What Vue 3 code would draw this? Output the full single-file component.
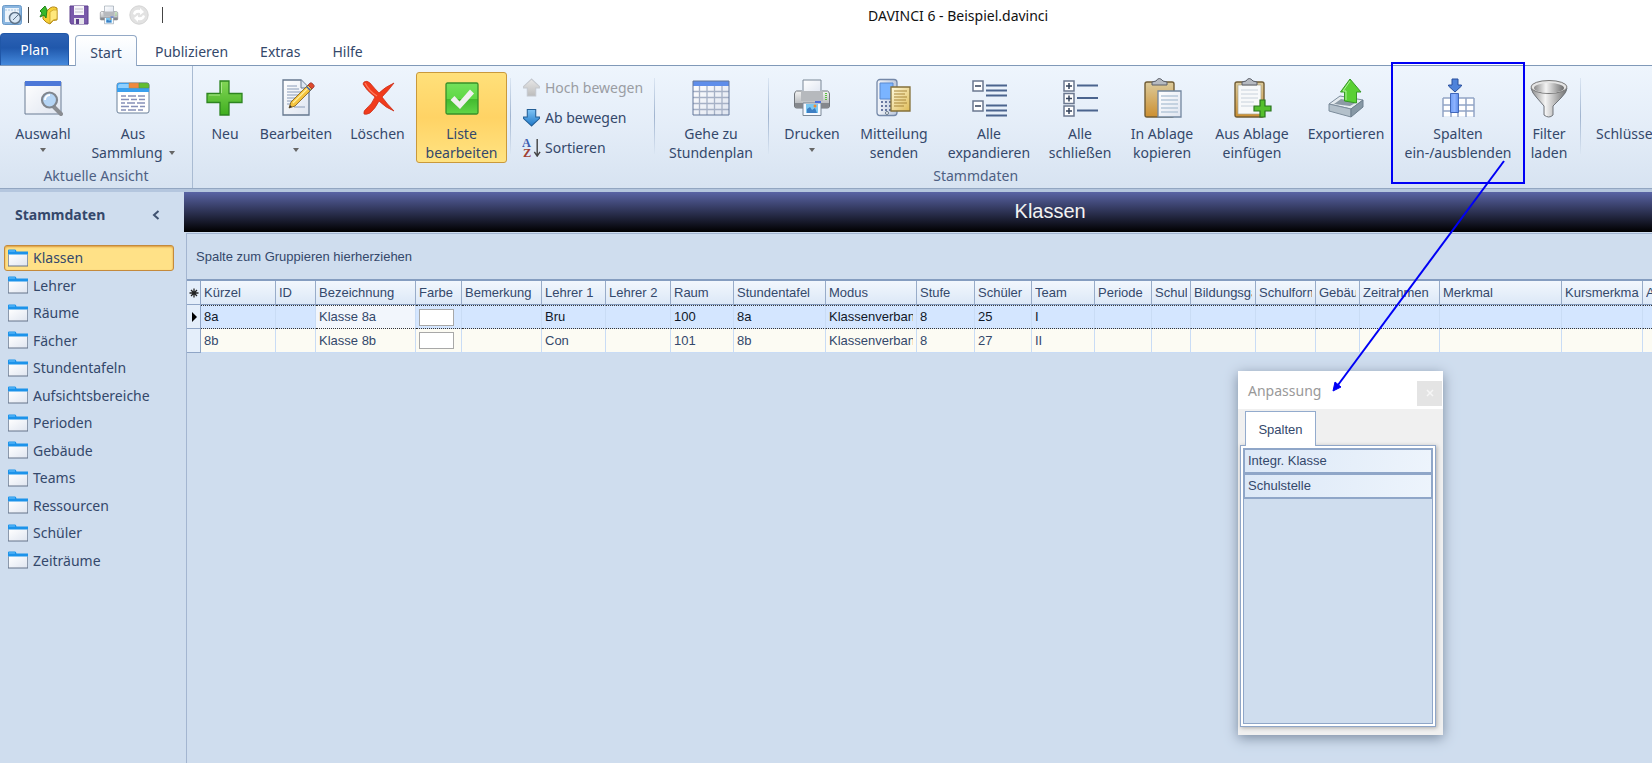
<script setup>
import { ref } from 'vue'

const menuTabs = ['Publizieren', 'Extras', 'Hilfe']

const editTools = [
  { icon: 'plus', lines: ['Neu'], size: 'w56' },
  { icon: 'edit', lines: ['Bearbeiten'], size: 'w86', menu: true },
  { icon: 'delete', lines: ['Löschen'], size: 'w77' },
  { icon: 'check', lines: ['Liste', 'bearbeiten'], size: 'w91', active: true }
]

const moveTools = [
  { icon: 'up', label: 'Hoch bewegen', disabled: true },
  { icon: 'down', label: 'Ab bewegen' },
  { icon: 'sort', label: 'Sortieren' }
]

const listTools = [
  { icon: 'printer', lines: ['Drucken'], size: 'w82', menu: true },
  { icon: 'phone', lines: ['Mitteilung', 'senden'], size: 'w82' },
  { icon: 'expand', lines: ['Alle', 'expandieren'], size: 'w108' },
  { icon: 'collapse', lines: ['Alle', 'schließen'], size: 'w74' },
  { icon: 'copy', lines: ['In Ablage', 'kopieren'], size: 'w90' },
  { icon: 'paste', lines: ['Aus Ablage', 'einfügen'], size: 'w90' },
  { icon: 'export', lines: ['Exportieren'], size: 'w98' },
  { icon: 'columns', lines: ['Spalten', 'ein-/ausblenden'], size: 'w126' },
  { icon: 'filter', lines: ['Filter', 'laden'], size: 'w56' }
]

const folders = ['Klassen', 'Lehrer', 'Räume', 'Fächer', 'Stundentafeln', 'Aufsichtsbereiche',
  'Perioden', 'Gebäude', 'Teams', 'Ressourcen', 'Schüler', 'Zeiträume']
const current = ref('Klassen')

const columns = [
  { name: 'Kürzel', width: 75 }, { name: 'ID', width: 40 }, { name: 'Bezeichnung', width: 100 },
  { name: 'Farbe', width: 46 }, { name: 'Bemerkung', width: 80 }, { name: 'Lehrer 1', width: 64 },
  { name: 'Lehrer 2', width: 65 }, { name: 'Raum', width: 63 }, { name: 'Stundentafel', width: 92 },
  { name: 'Modus', width: 91 }, { name: 'Stufe', width: 58 }, { name: 'Schüler', width: 57 },
  { name: 'Team', width: 63 }, { name: 'Periode', width: 57 }, { name: 'Schul', width: 39 },
  { name: 'Bildungsgang', width: 65 }, { name: 'Schulform', width: 60 }, { name: 'Gebäude', width: 44 },
  { name: 'Zeitrahmen', width: 80 }, { name: 'Merkmal', width: 122 }, { name: 'Kursmerkmal', width: 81 },
  { name: 'A', width: 0 }
]

const rows = [
  { 'Kürzel': '8a', Bezeichnung: 'Klasse 8a', 'Lehrer 1': 'Bru', Raum: '100', Stundentafel: '8a', Modus: 'Klassenverband', Stufe: '8', 'Schüler': '25', Team: 'I' },
  { 'Kürzel': '8b', Bezeichnung: 'Klasse 8b', 'Lehrer 1': 'Con', Raum: '101', Stundentafel: '8b', Modus: 'Klassenverband', Stufe: '8', 'Schüler': '27', Team: 'II' }
]

const hiddenColumns = ['Integr. Klasse', 'Schulstelle']
</script>

<template>
  <div class="screen">
    <svg class="sprite" width="0" height="0" aria-hidden="true">
      <defs>
        <linearGradient id="gBlue" x1="0" y1="0" x2="0" y2="1"><stop offset="0" stop-color="#7fc4f5" /><stop offset="1" stop-color="#1e78c8" /></linearGradient>
        <linearGradient id="gGrey" x1="0" y1="0" x2="0" y2="1"><stop offset="0" stop-color="#e8e8e8" /><stop offset="1" stop-color="#bcbcbc" /></linearGradient>
        <linearGradient id="gGreen" x1="0" y1="0" x2="0" y2="1"><stop offset="0" stop-color="#83d656" /><stop offset="1" stop-color="#3fae1f" /></linearGradient>
        <linearGradient id="gTick" x1="0" y1="0" x2="0" y2="1"><stop offset="0" stop-color="#74e05c" /><stop offset=".5" stop-color="#5fd845" /><stop offset=".51" stop-color="#42b92e" /><stop offset="1" stop-color="#62d648" /></linearGradient>
        <linearGradient id="gPaper" x1="0" y1="0" x2="1" y2="1"><stop offset="0" stop-color="#ffffff" /><stop offset="1" stop-color="#dfe5f0" /></linearGradient>
        <linearGradient id="gWood" x1="0" y1="0" x2="0" y2="1"><stop offset="0" stop-color="#dccb9c" /><stop offset="1" stop-color="#cc8f30" /></linearGradient>
        <linearGradient id="gSteel" x1="0" y1="0" x2="1" y2="0"><stop offset="0" stop-color="#8a8a8a" /><stop offset=".4" stop-color="#f4f4f4" /><stop offset="1" stop-color="#6e6e6e" /></linearGradient>
        <linearGradient id="gSteelDown" x1="0" y1="0" x2="0" y2="1"><stop offset="0" stop-color="#f4f4f4" /><stop offset="1" stop-color="#a4a8ac" /></linearGradient>
        <linearGradient id="gPhone" x1="0" y1="0" x2="1" y2="0"><stop offset="0" stop-color="#f2f5fa" /><stop offset="1" stop-color="#bcc8dc" /></linearGradient>
        <linearGradient id="gGold" x1="0" y1="0" x2="1" y2="1"><stop offset="0" stop-color="#fffbe0" /><stop offset="1" stop-color="#dfbb55" /></linearGradient>
        <linearGradient id="gRoyal" x1="0" y1="0" x2="1" y2="0"><stop offset="0" stop-color="#6f9df5" /><stop offset=".5" stop-color="#8db2ff" /><stop offset="1" stop-color="#5c8be8" /></linearGradient>
      </defs>
      <symbol id="i-window" viewBox="0 0 40 40">
        <path d="M2 4h36v32H2z" fill="url(#gPaper)" stroke="#6b7d94" />
        <path d="M2 3h36v5H2z" fill="#4d78d8" />
        <path d="m31 29 7 7" stroke="#8a8d92" stroke-width="4" stroke-linecap="round" />
        <circle cx="26.500" cy="22" r="7.500" fill="#b5d5f5" stroke="#80868e" stroke-width="2.200" />
        <path d="M22 22a5 5 0 0 1 5-5" stroke="#fff" stroke-width="2" fill="none" />
      </symbol>
      <symbol id="i-collection" viewBox="0 0 40 40">
        <rect x="4" y="5" width="32" height="30" rx="2" fill="#fff" stroke="#6b8099" />
        <path d="M4 14V7q0-2 2-2h10v4h20v5z" fill="#3aa0ee" />
        <path d="M5 8q0-2 2-2h9v4H5z" fill="#8fd0ff" />
        <rect x="16" y="5" width="10" height="5" fill="#f0893e" stroke="#a85" stroke-width=".5" />
        <path d="M26 5h8q2 0 2 2v3H26z" fill="#63bd30" stroke="#585" stroke-width=".5" />
        <path d="M8 18h5m2 0h8m2 0h7M8 21.500h8m2 0h6m2 0h6M8 25h4m2 0h8m2 0h8M8 28.500h8m2 0h7m2 0h5M8 32h5m2 0h8m2 0h5" stroke="#8590b8" stroke-width="1.300" />
      </symbol>
      <symbol id="i-plus" viewBox="0 0 40 40">
        <path d="M15 3h9v12.500h13v9H24V37h-9V24.500H2v-9h13z" fill="url(#gGreen)" stroke="#2d8420" stroke-width="1.300" />
        <path d="M16.500 15V4.500M15 17H4" fill="none" stroke="#a8e68a" />
      </symbol>
      <symbol id="i-edit" viewBox="0 0 40 40">
        <path d="M7 2h18l8 8v27H7z" fill="url(#gPaper)" stroke="#66788f" stroke-width="1.300" />
        <path d="M25 2v8h8" fill="#dbe6f2" stroke="#66788f" />
        <path d="M11 8h10M11 11h12M11 14h17M11 17h15M11 20h12M11 23h10M11 26h8M18 29h11" stroke="#8a9cb8" />
        <path d="m13 30 2-6L32 7l4 4-17 17z" fill="#f5c43e" stroke="#7d5b17" stroke-width=".8" />
        <path d="m17 25 16-16" stroke="#fff0a0" stroke-width="1.300" />
        <path d="m32 7 2-2q1-1 3 1t1 3l-2 2z" fill="#e0492c" stroke="#833" stroke-width=".7" />
        <path d="m30 9 4 4 1-1-4-4z" fill="#3a5fae" />
        <path d="m13 30 1-3 2 2z" fill="#333" />
      </symbol>
      <symbol id="i-delete" viewBox="0 0 40 40">
        <path d="M6 4Q9 2 12 5q5 6 9 10Q27 9 36 5q-6 8-12 14 5 7 12 14-8-3-15-10-4 8-9 12-4 2-6 1-1-3 3-6 5-4 8-11Q8 12 5 6z" fill="#f13b1c" stroke="#ca3019" stroke-width=".8" />
        <path d="M7 5q4 8 12 13" fill="none" stroke="#ff7a5c" stroke-width="1.300" />
      </symbol>
      <symbol id="i-check" viewBox="0 0 40 40">
        <rect x="4" y="5" width="32" height="31" rx="1.500" fill="url(#gTick)" stroke="#389028" stroke-width="1.300" />
        <path d="m8.500 22 4-4 5 5.500L28 11.500l4 4L18 31z" fill="#f0f0f0" />
      </symbol>
      <symbol id="i-up" viewBox="0 0 18 18"><path d="M9 1 1.500 8v1.500h3.500V17h8V9.500h3.500V8z" fill="url(#gGrey)" stroke="#c4c8ce" /></symbol>
      <symbol id="i-down" viewBox="0 0 18 18"><path d="M9 17 1.500 10V8.500h3.500v-7h8v7h3.500V10z" fill="url(#gBlue)" stroke="#225e96" /></symbol>
      <symbol id="i-sort" viewBox="0 0 20 20">
        <text x="0" y="9" font-family="Liberation Serif, serif" font-weight="bold" font-size="13" fill="#3b5db0">A</text>
        <text x="1" y="20" font-family="Liberation Serif, serif" font-weight="bold" font-size="13" fill="#a04034">Z</text>
        <path d="M16 1v17M13 14.500l3 4.500 3-4.500" stroke="#444" stroke-width="1.500" fill="none" />
      </symbol>
      <symbol id="i-grid" viewBox="0 0 40 40">
        <path d="M2 3h36v34H2z" fill="url(#gPaper)" />
        <path d="M8.500 8v29M16 8v29M23.500 8v29M31 8v29M2 13.500h36M2 19.500h36M2 25.500h36M2 31.500h36" stroke="#a6b1c6" stroke-width="1.300" />
        <path d="M2 3h36v5H2z" fill="#5f8eea" />
        <path d="M2 3h36v34H2z" fill="none" stroke="#62779a" />
      </symbol>
      <symbol id="i-printer" viewBox="0 0 40 40">
        <path d="M11 2h18v13H11z" fill="url(#gPaper)" stroke="#7b8897" />
        <path d="M2.500 16q0-2 2-3H10v4h20v-4h5.500q2 1 2 3v12q0 2-2 2h-31q-2 0-2-2z" fill="url(#gSteelDown)" stroke="#70757b" />
        <path d="M3 25h34v3q0 2-2 2H5q-2 0-2-2z" fill="#85888d" />
        <path d="M9 13h22v10H9z" fill="#b6b9bd" />
        <path d="M11 25h18v12.500H11z" fill="#f5f9ff" stroke="#7b8897" />
        <path d="M14 26h12v9H14z" fill="#7cc7f0" />
        <path d="m15 31 3-2 2 3 3-2 2 5H15z" fill="#3d7fc4" /><circle cx="23" cy="28" r="1.500" fill="#f28c30" />
        <path d="M23 24h6" stroke="#4b6edb" stroke-width="2" /><path d="M34 15v7" stroke="#58c23c" stroke-width="2" stroke-dasharray="1 1" />
      </symbol>
      <symbol id="i-phone" viewBox="0 0 40 40">
        <rect x="3" y="1.500" width="20" height="36" rx="3" fill="url(#gPhone)" stroke="#7488a8" stroke-width="1.300" />
        <path d="M6 5h13v16H6z" fill="#7ab4ff" stroke="#5a8ad0" />
        <path d="M7 24h2m2 0h2m2 0h2M7 28h2m2 0h2m2 0h2M7 32h2m2 0h2m2 0h2" stroke="#6878a0" stroke-width="2" />
        <circle cx="13" cy="35" r="1.500" fill="#fff" stroke="#678" />
        <path d="M17 9h19v24H17z" fill="url(#gGold)" stroke="#84703a" stroke-width="1.300" />
        <path d="M20 13h13M20 16h11M20 19h13M20 22h12M20 25h13M20 28h10" stroke="#a8863a" stroke-width="1.200" />
      </symbol>
      <symbol id="i-expand" viewBox="0 0 40 40">
        <path d="M4 3h10v10H4zM4 23h10v10H4z" fill="#fff" stroke="#6b7890" stroke-width="1.500" />
        <path d="M6 8h6M6 28h6" stroke="#34435c" stroke-width="1.600" />
        <path d="M17 7.500h21M17 12.500h21M17 17.500h21M17 27.500h21M17 32.500h21M17 37.500h21" stroke="#4b648e" stroke-width="2.200" />
      </symbol>
      <symbol id="i-collapse" viewBox="0 0 40 40">
        <path d="M4 3h10v10H4zM4 15.500h10v10H4zM4 28h10v10H4z" fill="#fff" stroke="#6b7890" stroke-width="1.500" />
        <path d="M6 8h6M9 5v6M6 20.500h6M9 17.500v6M6 33h6M9 30v6" stroke="#34435c" stroke-width="1.500" />
        <path d="M17 7.500h21M17 20h21M17 32.500h21" stroke="#4b648e" stroke-width="2.200" />
      </symbol>
      <symbol id="i-copy" viewBox="0 0 40 40">
        <rect x="3" y="4" width="29" height="35" rx="2" fill="url(#gWood)" stroke="#705c35" stroke-width="1.400" />
        <path d="M10 7V4l4-1q3-5 7 0l4 1v3z" fill="#b6bac0" stroke="#5a5f68" />
        <path d="M16 13h23v26H16z" fill="url(#gPaper)" stroke="#72869f" stroke-width="1.300" />
        <path d="M19 18h17M19 22h17M19 26h17M19 30h17M19 34h17" stroke="#b7c7d9" stroke-width="1.300" />
      </symbol>
      <symbol id="i-paste" viewBox="0 0 40 40">
        <rect x="3" y="4" width="29" height="35" rx="2" fill="url(#gWood)" stroke="#705c35" stroke-width="1.400" />
        <path d="M6 7h23v29H6z" fill="#f7f9fa" stroke="#aaa68f" stroke-width=".7" />
        <path d="M9 12h17M9 16h17M9 20h17M9 24h13M9 28h12" stroke="#c8d2dc" />
        <path d="M10 7V4l4-1q3-5 7 0l4 1v3z" fill="#b6bac0" stroke="#5a5f68" />
        <path d="M28 22h5v6h6v5h-6v6h-5v-6h-6v-5h6z" fill="#55bf2d" stroke="#2a741e" stroke-width="1.200" />
      </symbol>
      <symbol id="i-export" viewBox="0 0 40 40">
        <path d="m3 26 11-8 23 4-12 9z" fill="#e5ebef" stroke="#7d8d9c" />
        <path d="m3 26 22 5v8L3 33z" fill="#b3c0ca" stroke="#7d8d9c" />
        <path d="m25 31 12-9v7l-12 10z" fill="#8798a5" stroke="#6c7e8d" />
        <path d="m8 26 7-5 16 3-7 4z" fill="#8c9aa5" />
        <path d="M24 1 14.500 14h4v9l12 2V14H35z" fill="#59d034" stroke="#379826" />
        <path d="m24 3-7 10h3v9" fill="none" stroke="#b0f29a" />
      </symbol>
      <symbol id="i-columns" viewBox="0 0 40 40">
        <path d="M5 20h31v18H5z" fill="#fff" />
        <path d="M5 20h31M5 27h31M5 33h31M5 20v19M13 20v19M20 20v19M28 20v19M36 20v19" stroke="#92a5c6" stroke-width="1.500" fill="none" />
        <path d="M12.500 15.500h8v19h-8z" fill="url(#gRoyal)" stroke="#4167ba" />
        <path d="M14 1h6v6h3.500v1L17 14l-6.500-6V7H14z" fill="#4f83da" stroke="#284f9c" />
      </symbol>
      <symbol id="i-filter" viewBox="0 0 40 40">
        <path d="M2 10q1 5 6 10l7 8v9q5 4 9 0v-9l8-8q6-6 6-10z" fill="url(#gSteel)" stroke="#70757b" />
        <ellipse cx="20" cy="9" rx="18" ry="6.500" fill="#e5e5e5" stroke="#777" />
        <ellipse cx="20" cy="10" rx="15" ry="5" fill="url(#gSteel)" />
      </symbol>
      <symbol id="i-folder" viewBox="0 0 20 18">
        <path d="M0 3V1.500q0-1 1-1h6q1 0 1.500 2H20V7H0z" fill="#1c93ea" />
        <path d="M1 2h6" stroke="#6cc4ff" />
        <path d="M.500 5.500h19v11.500H.500z" fill="url(#gPaper)" />
        <path d="M.500 5.500V17M19.500 5.500V17" stroke="#8c99ac" /><path d="M0 17h20" stroke="#66758a" />
      </symbol>
      <symbol id="i-app" viewBox="0 0 20 20">
        <rect x=".5" y=".5" width="19" height="19" rx="2" fill="#8ab6e0" stroke="#6b9ac8" />
        <path d="M3 3h14v14H3z" fill="#edf4fb" /><path d="M3 5h14" stroke="#a9c6e0" stroke-dasharray="2 1" />
        <circle cx="13" cy="13" r="5.500" fill="#d8e7f5" stroke="#5f7388" stroke-width="1.500" /><path d="m11 15 5-5" stroke="#5f7388" />
      </symbol>
      <symbol id="i-open" viewBox="0 0 20 20">
        <path d="M9 5q4-5 9-2v12q-4-1-7 4-4-1-7-5V8z" fill="#f7cf35" stroke="#b38711" />
        <path d="M11 7q3-3 7-2v9q-4 0-7 4z" fill="#ffe87c" stroke="#c49c20" stroke-width=".7" />
        <path d="m1 6 5-5 2 4-1 8-2-3-4 2 2-4z" fill="#38b82b" stroke="#218519" />
      </symbol>
      <symbol id="i-save" viewBox="0 0 20 20">
        <path d="M1 1h18v18H2l-1-2z" fill="#7959aa" stroke="#5d408d" />
        <path d="M5 1h10v9H5z" fill="#f7f5fa" /><path d="M6 4h8M6 7h8" stroke="#c1c1cc" />
        <path d="M5 13h10v6H5z" fill="#e4e4ea" /><path d="M7 14h3v5H7z" fill="#5d408d" />
      </symbol>
      <symbol id="i-refresh" viewBox="0 0 20 20">
        <circle cx="10" cy="10" r="9.200" fill="#e2e2e2" stroke="#d4d4d4" />
        <path d="M4 9q1-5 7-4V3l4 4-4 3V8Q7 7 6 10zM16 11q-1 5-7 4v2l-4-4 4-3v2q4 1 5-2z" fill="#fff" />
      </symbol>
    </svg>

    <div class="app">
      <header class="titlebar">
        <div class="quick">
          <button type="button" aria-label="daVinci"><svg><use href="#i-app" /></svg></button>
          <i class="bar"></i>
          <button type="button" aria-label="Öffnen" class="first"><svg><use href="#i-open" /></svg></button>
          <button type="button" aria-label="Speichern"><svg><use href="#i-save" /></svg></button>
          <button type="button" aria-label="Drucken"><svg><use href="#i-printer" /></svg></button>
          <button type="button" aria-label="Aktualisieren" disabled><svg><use href="#i-refresh" /></svg></button>
          <i class="bar last"></i>
        </div>
        <span class="caption">DAVINCI 6 - Beispiel.davinci</span>
      </header>

      <nav class="tabs">
        <button type="button" class="tab plan">Plan</button>
        <button type="button" class="tab selected">Start</button>
        <button v-for="t in menuTabs" :key="t" type="button" class="tab">{{ t }}</button>
      </nav>

      <section class="ribbon">
        <div class="group view">
          <div class="tools">
            <button type="button" class="tool w86">
              <svg><use href="#i-window" /></svg><span>Auswahl</span><i class="arrow below"></i>
            </button>
            <button type="button" class="tool w94">
              <svg><use href="#i-collection" /></svg><span>Aus</span><span class="with-arrow">Sammlung<i class="arrow"></i></span>
            </button>
          </div>
          <h2>Aktuelle Ansicht</h2>
        </div>
        <div class="group master">
          <div class="tools">
            <button v-for="t in editTools" :key="t.icon" type="button" class="tool" :class="[t.size, { active: t.active }]">
              <svg><use :href="'#i-' + t.icon" /></svg>
              <span v-for="l in t.lines" :key="l">{{ l }}</span>
              <i v-if="t.menu" class="arrow below"></i>
            </button>
            <i class="divider"></i>
            <div class="stack">
              <button v-for="t in moveTools" :key="t.icon" type="button" class="small" :disabled="t.disabled">
                <svg><use :href="'#i-' + t.icon" /></svg>{{ t.label }}
              </button>
            </div>
            <i class="divider"></i>
            <button type="button" class="tool w108">
              <svg><use href="#i-grid" /></svg><span>Gehe zu</span><span>Stundenplan</span>
            </button>
            <i class="divider"></i>
            <button v-for="t in listTools" :key="t.icon" type="button" class="tool" :class="t.size">
              <svg><use :href="'#i-' + t.icon" /></svg>
              <span v-for="l in t.lines" :key="l">{{ l }}</span>
              <i v-if="t.menu" class="arrow below"></i>
            </button>
            <i class="divider"></i>
            <button type="button" class="tool key"><span>Schlüssel</span></button>
          </div>
          <h2>Stammdaten</h2>
        </div>
      </section>

      <div class="body">
        <aside class="sidebar">
          <div class="side-head">
            <h3>Stammdaten</h3>
            <button type="button" aria-label="Einklappen">
              <svg viewBox="0 0 8 10"><path d="M6.500 1 2 5l4.500 4" fill="none" stroke="#3f5270" stroke-width="2" /></svg>
            </button>
          </div>
          <nav class="folders">
            <a v-for="f in folders" :key="f" href="#" :class="{ current: f === current }" @click.prevent="current = f">
              <svg><use href="#i-folder" /></svg>{{ f }}
            </a>
          </nav>
        </aside>

        <main class="main">
          <h1>Klassen</h1>
          <div class="grid">
            <p>Spalte zum Gruppieren hierherziehen</p>
            <table>
              <colgroup>
                <col class="mark">
                <col v-for="c in columns" :key="c.name" :style="c.width ? { width: c.width + 'px' } : null">
              </colgroup>
              <thead>
                <tr>
                  <th class="mark"><svg viewBox="0 0 10 10"><path d="M5 .500v9M.500 5h9M2 2l6 6M8 2 2 8" stroke="#222" stroke-width="1.300" /></svg></th>
                  <th v-for="c in columns" :key="c.name"><div class="clip">{{ c.name }}</div></th>
                </tr>
              </thead>
              <tbody>
                <tr v-for="(r, i) in rows" :key="i" :class="{ focused: i === 0 }">
                  <td class="mark"><svg v-if="i === 0" viewBox="0 0 10 10"><path d="M3 0v10l5-5z" fill="#000" /></svg></td>
                  <td v-for="c in columns" :key="c.name" :class="{ plain: c.name === 'Bezeichnung' }">
                    <span v-if="c.name === 'Farbe'" class="swatch"></span>
                    <div v-else class="clip">{{ r[c.name] }}</div>
                  </td>
                </tr>
              </tbody>
            </table>
          </div>
        </main>
      </div>
    </div>

    <section class="dialog" role="dialog" aria-label="Anpassung">
      <header>
        <span>Anpassung</span>
        <button type="button" aria-label="Schließen"><svg viewBox="0 0 8 8"><path d="m1 1 6 6M7 1 1 7" stroke="#f6f6f6" stroke-width="1.500" /></svg></button>
      </header>
      <button type="button" class="sheet-tab">Spalten</button>
      <div class="sheet">
        <ul>
          <li v-for="h in hiddenColumns" :key="h">{{ h }}</li>
        </ul>
      </div>
    </section>

    <svg class="callout" width="200" height="340" viewBox="0 0 200 340" aria-hidden="true">
      <path d="M62 3h132v120H62z" fill="none" stroke="#0000f5" stroke-width="2" />
      <path d="M174 101 8 325" stroke="#0000f5" stroke-width="2" />
      <path d="m3 331 2-9 6 5z" fill="#0000f5" stroke="#0000f5" />
    </svg>
  </div>
</template>

<style>
html, body { margin: 0; height: 100%; }
#app { height: 100%; }
</style>

<style scoped>
.screen {
  position: relative;
  min-height: 100vh;
  overflow: hidden;
  display: flex;
  background: #cfddee;
  color: #34486b;
  font: 14px/19px "Noto Sans", "Open Sans", sans-serif;
}
.sprite { position: absolute; }
.app { width: 116vw; flex: none; display: flex; flex-direction: column; }
button { margin: 0; padding: 0; border: 0; background: none; color: inherit; font: inherit; }
h1, h2, h3, p, ul { margin: 0; padding: 0; font: inherit; list-style: none; }

.titlebar { display: grid; grid-template-columns: 1fr auto 1fr; align-items: center; height: 30px; background: #fff; }
.quick { display: flex; align-items: center; gap: 10px; padding-left: 2px; }
.quick svg { display: block; width: 20px; height: 20px; }
.quick .bar { width: 1px; height: 16px; margin: 0 -4px; background: #444; }
.quick .first { margin-left: 4px; }
.quick .bar.last { margin-left: 3px; }
.caption { color: #111; }

.tabs { display: flex; align-items: flex-end; height: 35px; background: #fff; }
.tab { height: 30px; padding: 2px 14px 0; margin-right: 4px; }
.tab.plan { height: 32px; width: 69px; padding: 0; margin-right: 6px; border: 1px solid #2057a8; border-bottom: 0; border-radius: 4px 4px 0 0; background: linear-gradient(#2d62b4, #2058ac 45%, #4489dc); color: #fff; }
.tab.selected { position: relative; z-index: 1; width: 62px; padding: 2px 0 0; height: 31px; margin-bottom: -1px; border: 1px solid #93a9c6; border-bottom: 0; border-radius: 4px 4px 0 0; background: linear-gradient(#fff, #eef5fd); }

.ribbon { display: flex; height: 122px; border-top: 1px solid #8099b8; border-bottom: 1px solid #92a6c1; background: linear-gradient(#eef5fd, #e4edf8 50%, #d7e3f1); }
.group { display: flex; flex-direction: column; box-sizing: border-box; padding-top: 6px; }
.group h2 { text-align: center; color: #4d5f83; padding-top: 3px; }
.view { width: 193px; border-right: 1px solid #a9bbd2; }
.master { flex: 1; margin-right: 162px; padding-left: 4px; }
.tools { display: flex; height: 91px; }
.tool { box-sizing: border-box; flex: none; display: flex; flex-direction: column; align-items: center; padding-top: 6px; white-space: nowrap; }
.tool svg { width: 40px; height: 40px; margin-bottom: 6px; flex: none; }
.tool span { height: 19px; }
.tool.active { padding-top: 5px; border: 1px solid #c9993c; border-radius: 3px; background: linear-gradient(#ffe07a, #ffd365 50%, #ffe382); }
.w56 { width: 56px; }
.w74 { width: 74px; }
.w77 { width: 77px; }
.w82 { width: 82px; }
.w86 { width: 86px; }
.w90 { width: 90px; }
.w91 { width: 91px; }
.w94 { width: 94px; }
.w98 { width: 98px; }
.w108 { width: 108px; }
.w126 { width: 126px; }
.key { padding: 52px 0 0 13px; }
.arrow { flex: none; width: 0; height: 0; border: 3px solid transparent; border-top: 4px solid #666; border-bottom: 0; }
.arrow.below { margin-top: 5px; }
.with-arrow { display: flex; align-items: center; gap: 6px; }
.divider { flex: none; width: 1px; height: 76px; margin: 6px 2px 0 3px; background: linear-gradient(#dbe6f3, #a0b4cf 50%, #dbe6f3); }
.stack { width: 138px; display: flex; flex-direction: column; }
.small { height: 30px; display: flex; align-items: center; gap: 4px; padding-left: 9px; white-space: nowrap; }
.small svg { width: 19px; height: 19px; }
.small:disabled { color: #9a9da3; }

.body { flex: 1; display: flex; border-top: 3px solid #b4c6de; }
.sidebar { width: 184px; flex: none; box-sizing: border-box; }
.side-head { display: flex; align-items: center; justify-content: space-between; height: 45px; padding: 0 24px 0 15px; }
.side-head h3 { font-weight: bold; }
.side-head svg { display: block; width: 8px; height: 10px; }
.folders { display: grid; grid-auto-rows: 1fr; height: 330px; padding: 8px 10px 0 4px; }
.folders a { display: flex; align-items: center; gap: 5px; padding-left: 3px; border: 1px solid transparent; border-radius: 3px; margin-bottom: 2px; color: inherit; text-decoration: none; }
.folders a.current { border-color: #c48a3c; background: #ffe187; box-shadow: inset 0 1px 2px #d9993e; }
.folders svg { width: 20px; height: 18px; flex: none; }

.main { flex: 1; min-width: 0; display: flex; flex-direction: column; font-family: "Liberation Sans", Arial, sans-serif; font-size: 13px; }
.main h1 { height: 40px; line-height: 39px; text-align: center; color: #f2f2f2; font-size: 20px; background: linear-gradient(#5964a5, #000); }
.grid { flex: 1; margin: 1px 0 0 2px; border: 1px solid #a3b5d0; border-width: 1px 0 0 1px; }
.grid p { height: 45px; line-height: 46px; padding-left: 9px; }
table { width: 100%; table-layout: fixed; border-collapse: separate; border-spacing: 0; border-top: 2px solid #859dc0; }
col.mark { width: 14px; }
th, td { box-sizing: border-box; height: 24px; padding: 0 3px; white-space: nowrap; text-align: left; font-weight: normal; line-height: 20px; }
.clip { overflow: hidden; }
th { border-right: 1px solid #98acc9; border-bottom: 1px solid #8399bb; background: linear-gradient(#f2f7fd, #dce8f7); }
td { border-right: 1px solid #c9dcf5; border-bottom: 1px solid #c9dcf5; background: #fcfbf3; }
th.mark, td.mark { padding: 0; text-align: center; background: #e4eefa; border-right: 1px solid #8fa5c6; border-bottom: 1px solid #8fa5c6; }
.mark svg { width: 10px; height: 10px; vertical-align: middle; }
.focused td:not(.mark) { border-top: 1px dotted #333; border-bottom: 1px dotted #333; background: #d4e6ff; color: #101828; }
.focused td.plain:not(.mark) { background: #f2f6fc; color: #34486b; }
.swatch { display: block; box-sizing: border-box; width: 35px; height: 17px; border: 1px solid #a8a8a8; background: #fff; }

.dialog { position: absolute; left: 1238px; top: 371px; box-sizing: border-box; width: 205px; height: 364px; display: flex; flex-direction: column; padding: 0 7px 8px 2px; background: #f0f0f0; box-shadow: 0 3px 12px #7c8ca0; font-family: "Liberation Sans", Arial, sans-serif; font-size: 13px; }
.dialog header { display: flex; align-items: center; justify-content: space-between; height: 38px; margin: 0 -7px 2px -2px; padding: 0 1px 0 10px; background: #fff; color: #999; font-family: "Noto Sans", "Open Sans", sans-serif; font-size: 14px; }
.dialog header button { display: grid; place-items: center; width: 25px; height: 25px; margin-top: 6px; background: #e4e4e4; }
.dialog header svg { width: 8px; height: 8px; }
.sheet-tab { position: relative; z-index: 1; align-self: flex-start; box-sizing: border-box; width: 71px; height: 35px; margin: 0 0 -1px 5px; border: 1px solid #93abcd; border-bottom: 0; background: #fff; }
.sheet { flex: 1; display: flex; padding: 2px; border: 1px solid #8fa6c8; background: #fff; box-shadow: 1px 1px 4px #aaa; }
.sheet ul { flex: 1; border: 1px solid #8fa6c8; background: #cfddee; }
.sheet li { box-sizing: border-box; height: 25px; padding-left: 3px; line-height: 22px; border: 1px solid #8fa6c8; border-width: 1px 1px 2px; background: linear-gradient(100deg, #dce8f7, #edf4fc); }
.callout { position: absolute; left: 1330px; top: 60px; pointer-events: none; }
</style>
